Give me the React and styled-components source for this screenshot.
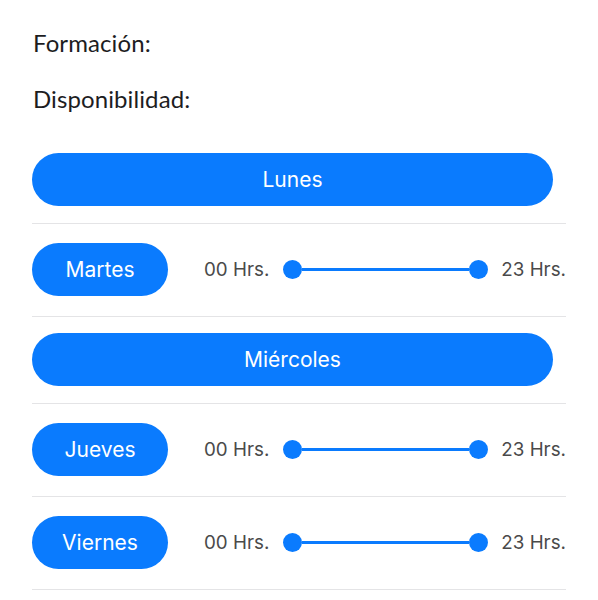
import styled, { createGlobalStyle } from "styled-components";

const GlobalStyle = createGlobalStyle`
  body {
    margin: 0;
    background: #ffffff;
    font-family: Inter, "Liberation Sans", sans-serif;
  }
`;

const days = [
  { name: "Lunes", open: false },
  { name: "Martes", open: true, from: "00", to: "23" },
  { name: "Miércoles", open: false },
  { name: "Jueves", open: true, from: "00", to: "23" },
  { name: "Viernes", open: true, from: "00", to: "23" },
];

export default function App() {
  return (
    <>
      <GlobalStyle />
      <Page>
        <Label>Formación:</Label>
        <Label>Disponibilidad:</Label>
        <List>
          {days.map((day) =>
            day.open ? (
              <Row key={day.name} $slider>
                <DayButton $compact>{day.name}</DayButton>
                <Hours>{day.from} Hrs.</Hours>
                <Range>
                  <Thumb />
                  <Track />
                  <Thumb />
                </Range>
                <Hours>{day.to} Hrs.</Hours>
              </Row>
            ) : (
              <Row key={day.name}>
                <DayButton>{day.name}</DayButton>
              </Row>
            )
          )}
        </List>
      </Page>
    </>
  );
}

const Page = styled.div`
  padding: 27px 32px 0 32px;
  display: flex;
  flex-direction: column;
`;

const Label = styled.div`
  font-family: Lato, "Noto Sans", sans-serif;
  font-size: 24px;
  line-height: 32px;
  letter-spacing: 0.1px;
  color: #1d1d1f;
  margin-bottom: 24px;
  margin-left: 1px;
`;

const List = styled.div`
  display: flex;
  flex-direction: column;
  margin-top: 14px;
`;

const Row = styled.div`
  display: flex;
  align-items: center;
  padding: ${(p) => (p.$slider ? "19px 0 20px" : "16px 13px 17px 0")};
  border-bottom: 1px solid #e4e4e6;
  &:first-child {
    padding-top: 0;
  }
`;

const DayButton = styled.button`
  border: none;
  background: #0a7bfe;
  color: #ffffff;
  height: 53px;
  border-radius: 27px;
  font-family: Inter, "Liberation Sans", sans-serif;
  font-size: 21px;
  font-weight: 400;
  width: ${(p) => (p.$compact ? "136px" : "100%")};
  flex-shrink: 0;
  margin-right: ${(p) => (p.$compact ? "36px" : "0")};
  padding: 0;
`;

const Hours = styled.span`
  font-family: Inter, "Liberation Sans", sans-serif;
  font-size: 18.8px;
  color: #4a4a4a;
  white-space: nowrap;
`;

const Range = styled.div`
  flex: 1;
  display: flex;
  align-items: center;
  margin: 0 13px 0 14px;
`;

const Track = styled.div`
  flex: 1;
  height: 3px;
  background: #0a7bfe;
`;

const Thumb = styled.div`
  width: 19px;
  height: 19px;
  border-radius: 50%;
  background: #0a7bfe;
  flex-shrink: 0;
`;
